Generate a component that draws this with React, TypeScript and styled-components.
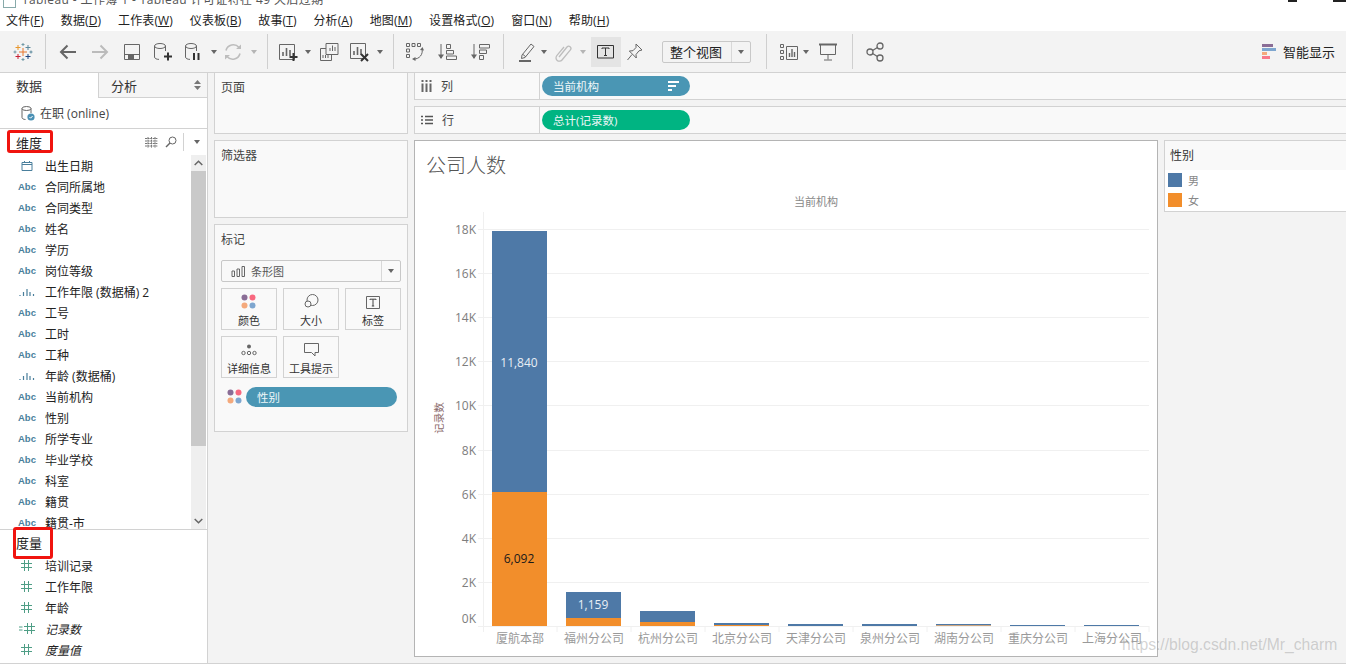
import React from "react";
import styled, { createGlobalStyle } from "styled-components";

const GlobalStyle = createGlobalStyle`
  html, body { margin: 0; padding: 0; background: #fff; }
  body { font-family: "Open Sans", "Noto Sans CJK SC", sans-serif; font-size: 12px; color: #222; }
`;

const Page = styled.div`
  position: relative;
  width: 1346px;
  height: 664px;
  overflow: hidden;
  background: #f3f3f3;
  display: flex;
  flex-direction: column;
`;

const TitleBar = styled.div`
  height: 8px;
  flex: none;
  background: #fff;
  display: flex;
  align-items: flex-end;
  overflow: hidden;
  padding-left: 3px;
  gap: 6px;
  color: #555;
  font-size: 12px;
  line-height: 16px;
  letter-spacing: 0.4px;
`;

const TitleIcon = styled.span`
  flex: none;
  width: 13px;
  height: 12px;
  border: 1px solid #8aa;
  box-sizing: border-box;
`;

const WindowControl = styled.span<{ $w: number; $ml: string }>`
  flex: none;
  align-self: flex-start;
  width: ${(p) => p.$w}px;
  height: 2px;
  margin-left: ${(p) => p.$ml};
  background: #222;
`;

const MenuBar = styled.div`
  height: 23px;
  flex: none;
  background: #fff;
  display: flex;
  align-items: center;
  gap: 17px;
  padding-left: 6px;
  color: #222;
  font-size: 12px;
`;

const MenuItem = styled.span`
  white-space: nowrap;
  letter-spacing: 0.1px;
`;

const Toolbar = styled.div`
  height: 41px;
  flex: none;
  display: flex;
  align-items: center;
  background: #f3f3f3;
  border-bottom: 1px solid #d2d2d2;
`;

const Slot = styled.div<{ $w: number; $ml?: number }>`
  flex: none;
  width: ${(p) => p.$w}px;
  margin-left: ${(p) => p.$ml ?? 0}px;
  height: 30px;
  display: flex;
  align-items: center;
  justify-content: center;
`;

const ActiveSlot = styled(Slot)`
  background: #e4e4e4;
`;

const ToolSep = styled.div<{ $ml?: number }>`
  flex: none;
  width: 1px;
  height: 35px;
  margin-left: ${(p) => p.$ml ?? 0}px;
  background: #cfcfcf;
`;

const Caret = styled.span<{ $light?: boolean }>`
  width: 0;
  height: 0;
  border-left: 3px solid transparent;
  border-right: 3px solid transparent;
  border-top: 4px solid ${(p) => (p.$light ? "#b5b5b5" : "#666")};
`;

const FitSelect = styled.div`
  flex: none;
  margin-left: 13px;
  width: 89px;
  height: 22px;
  box-sizing: border-box;
  border: 1px solid #c8c8c8;
  border-radius: 2px;
  display: flex;
  align-items: center;
  font-size: 13px;
  color: #222;
`;

const FitText = styled.span`
  flex: 1;
  padding-left: 7px;
`;

const FitCaret = styled.span`
  flex: none;
  width: 18px;
  align-self: stretch;
  display: flex;
  align-items: center;
  justify-content: center;
  border-left: 1px solid #d8d8d8;
`;

const ShowMe = styled.div`
  margin-left: auto;
  margin-right: 11px;
  display: flex;
  align-items: center;
  gap: 6px;
  font-size: 13px;
  color: #222;
`;

const Body = styled.div`
  flex: 1;
  display: flex;
  min-height: 0;
  border-bottom: 1px solid #d2d2d2;
`;

const DataPane = styled.div`
  flex: none;
  width: 208px;
  box-sizing: border-box;
  background: #fff;
  border-right: 1px solid #d2d2d2;
  display: flex;
  flex-direction: column;
`;

const Tabs = styled.div`
  display: flex;
  height: 25px;
  flex: none;
`;

const Tab = styled.div<{ $active?: boolean }>`
  box-sizing: border-box;
  display: flex;
  align-items: center;
  justify-content: space-between;
  color: #333;
  font-size: 13px;
  ${(p) =>
    p.$active
      ? `width: 98px; padding-left: 16px; background: #fff;`
      : `flex: 1; padding: 0 6px 0 12px; background: #f5f5f5; border-left: 1px solid #d2d2d2; border-bottom: 1px solid #d2d2d2;`}
`;

const Stepper = styled.span`
  display: flex;
  flex-direction: column;
  gap: 2px;
`;

const SourceRow = styled.div`
  height: 31px;
  flex: none;
  box-sizing: border-box;
  display: flex;
  align-items: center;
  gap: 4px;
  padding-left: 20px;
  border-bottom: 1px solid #d2d2d2;
  color: #444;
  font-size: 12px;
`;

const SectionHead = styled.div<{ $h: number }>`
  position: relative;
  height: ${(p) => p.$h}px;
  flex: none;
  display: flex;
  align-items: center;
  padding-left: 16px;
  font-size: 13px;
  color: #222;
`;

const RedMark = styled.span<{ $l: number; $t: number; $w: number; $h: number }>`
  position: absolute;
  left: ${(p) => p.$l}px;
  top: ${(p) => p.$t}px;
  width: ${(p) => p.$w}px;
  height: ${(p) => p.$h}px;
  box-sizing: border-box;
  border: 3px solid #f0140f;
  border-radius: 3px;
`;

const HeadTools = styled.div`
  margin-left: auto;
  display: flex;
  align-items: center;
  height: 100%;
`;

const HeadGap = styled.span`
  width: 7px;
`;

const HeadSep = styled.span`
  width: 1px;
  height: 18px;
  background: #d2d2d2;
  margin: 0 7px 0 6px;
`;

const CaretBox = styled.span`
  display: flex;
  width: 11px;
  justify-content: center;
  margin-right: 5px;
`;

const ListWrap = styled.div`
  height: 374px;
  flex: none;
  display: flex;
  border-bottom: 1px solid #d2d2d2;
  overflow: hidden;
`;

const FieldList = styled.div`
  flex: 1;
  overflow: hidden;
`;

const FieldRow = styled.div`
  height: 21px;
  flex: none;
  display: flex;
  align-items: center;
  white-space: nowrap;
  color: #222;
  font-size: 12px;
`;

const FieldIcon = styled.span`
  flex: none;
  width: 45px;
  padding-left: 9px;
  box-sizing: border-box;
  display: flex;
  justify-content: center;
`;

const AbcGlyph = styled.span`
  font-family: "Liberation Sans", sans-serif;
  font-size: 9.5px;
  font-weight: 700;
  color: #4a7f9c;
  letter-spacing: 0.1px;
`;

const FieldName = styled.span<{ $italic?: boolean }>`
  font-style: ${(p) => (p.$italic ? "italic" : "normal")};
`;

const Scrollbar = styled.div`
  flex: none;
  width: 15px;
  margin-right: 1px;
  display: flex;
  flex-direction: column;
  background: #efefef;
`;

const ScrollBtn = styled.div`
  height: 16px;
  flex: none;
  display: flex;
  align-items: center;
  justify-content: center;
`;

const ScrollThumb = styled.div`
  height: 275px;
  flex: none;
  background: #c9c9c9;
`;

const ScrollGap = styled.div`
  flex: 1;
`;

const MiddlePane = styled.div`
  flex: none;
  width: 194px;
  margin-left: 6px;
  display: flex;
  flex-direction: column;
  gap: 6px;
`;

const Card = styled.div<{ $h: number; $noTop?: boolean }>`
  height: ${(p) => p.$h}px;
  flex: none;
  box-sizing: border-box;
  background: #f9f9f9;
  border: 1px solid #d2d2d2;
  ${(p) => (p.$noTop ? "border-top: 0;" : "")}
  padding: 6px 6px;
  color: #444;
  font-size: 12px;
  line-height: 17px;
`;

const MarkSelect = styled.div`
  margin-top: 12px;
  height: 22px;
  box-sizing: border-box;
  border: 1px solid #c8c8c8;
  border-radius: 2px;
  display: flex;
  align-items: center;
  color: #555;
  font-size: 11px;
  padding-left: 9px;
  gap: 6px;
`;

const MarkCaret = styled.span`
  margin-left: auto;
  width: 18px;
  align-self: stretch;
  border-left: 1px solid #d8d8d8;
  display: flex;
  align-items: center;
  justify-content: center;
`;

const MarkGrid = styled.div`
  margin-top: 6px;
  display: grid;
  grid-template-columns: repeat(3, 56px);
  grid-auto-rows: 42px;
  gap: 6px;
`;

const MarkButton = styled.div`
  box-sizing: border-box;
  border: 1px solid #d2d2d2;
  display: flex;
  flex-direction: column;
  align-items: center;
  justify-content: flex-end;
  color: #333;
  font-size: 11px;
  line-height: 16px;
  white-space: nowrap;
`;

const MarkIcon = styled.span`
  height: 20px;
  margin-bottom: 1px;
  display: flex;
  align-items: center;
`;

const PillRow = styled.div`
  margin-top: 9px;
  display: flex;
  align-items: center;
  gap: 3px;
  padding-left: 6px;
`;

const Pill = styled.div<{ $color: string; $w: number }>`
  flex: none;
  box-sizing: border-box;
  width: ${(p) => p.$w}px;
  height: 20px;
  border-radius: 10px;
  background: ${(p) => p.$color};
  color: #eef6f8;
  font-size: 11.5px;
  display: flex;
  align-items: center;
  justify-content: space-between;
  padding: 0 11px;
`;

const MainPane = styled.div`
  flex: 1;
  margin-left: 6px;
  display: flex;
  flex-direction: column;
  min-width: 0;
`;

const Shelf = styled.div<{ $h: number; $noTop?: boolean; $mt?: number }>`
  height: ${(p) => p.$h}px;
  flex: none;
  box-sizing: border-box;
  margin-top: ${(p) => p.$mt ?? 0}px;
  background: #f9f9f9;
  border: 1px solid #d2d2d2;
  border-right: 0;
  ${(p) => (p.$noTop ? "border-top: 0;" : "")}
  display: flex;
  align-items: center;
`;

const ShelfLabel = styled.div`
  flex: none;
  width: 118px;
  align-self: stretch;
  border-right: 1px solid #d2d2d2;
  margin-right: 2px;
  display: flex;
  align-items: center;
  gap: 9px;
  padding-left: 6px;
  color: #444;
  font-size: 12px;
`;

const ViewRow = styled.div`
  margin-top: 6px;
  display: flex;
  gap: 6px;
  align-items: flex-start;
`;

const ChartCard = styled.div`
  flex: none;
  width: 744px;
  height: 517px;
  box-sizing: border-box;
  background: #fff;
  border: 1px solid #b4b4b4;
  display: flex;
  flex-direction: column;
`;

const ChartTitle = styled.div`
  height: 44px;
  flex: none;
  box-sizing: border-box;
  padding: 10px 0 0 11px;
  font-size: 20px;
  font-weight: 300;
  line-height: 30px;
  color: #555;
`;

const ChartSvg = styled.svg`
  display: block;
  flex: 1;
  font-family: "Open Sans", "Noto Sans CJK SC", sans-serif;
`;

const Legend = styled.div`
  flex: 1;
  height: 72px;
  box-sizing: border-box;
  border: 1px solid #d2d2d2;
  border-right: 0;
  background: #fff;
`;

const LegendHead = styled.div`
  height: 29px;
  box-sizing: border-box;
  background: #f9f9f9;
  display: flex;
  align-items: center;
  padding: 0 0 2px 5px;
  color: #333;
  font-size: 12px;
`;

const LegendRow = styled.div`
  height: 20px;
  display: flex;
  align-items: center;
  gap: 6px;
  padding-left: 3px;
  color: #888;
  font-size: 11px;
`;

const Swatch = styled.span<{ $color: string }>`
  width: 14px;
  height: 14px;
  background: ${(p) => p.$color};
`;

const Watermark = styled.div`
  position: absolute;
  left: 1122px;
  top: 634px;
  font-family: "Liberation Sans", sans-serif;
  font-size: 15.7px;
  line-height: 22px;
  color: rgba(150, 150, 150, 0.42);
  white-space: nowrap;
  pointer-events: none;
`;

const G = "#666";

const Svg = ({ w = 20, h = 20, children }: { w?: number; h?: number; children: React.ReactNode }) => (
  <svg width={w} height={h} viewBox={`0 0 ${w} ${h}`} fill="none">
    {children}
  </svg>
);

const TableauLogo = () => {
  const cross = (x: number, y: number, r: number, c: string) => (
    <path key={`${x}-${y}`} d={`M${x - r} ${y}H${x + r}M${x} ${y - r}V${y + r}`} stroke={c} strokeWidth={1} />
  );
  return (
    <Svg>
      {cross(10, 10, 4, "#e8762c")}
      {cross(5, 5.5, 2.5, "#e8962c")}
      {cross(15, 5.5, 2.5, "#5b879b")}
      {cross(5, 14.5, 2.5, "#c72035")}
      {cross(15, 14.5, 2.5, "#1f447e")}
      {cross(10, 2.5, 1.5, "#7099a6")}
      {cross(10, 17.5, 1.5, "#7099a6")}
      {cross(2, 10, 1.5, "#7099a6")}
      {cross(18, 10, 1.5, "#59879b")}
    </Svg>
  );
};

const Arrow = ({ dir, color }: { dir: "l" | "r"; color: string }) => (
  <Svg>
    <path
      d={dir === "l" ? "M18 10H3M9.5 3.5L3 10l6.5 6.5" : "M2 10h15M10.5 3.5L17 10l-6.5 6.5"}
      stroke={color}
      strokeWidth={2}
    />
  </Svg>
);

const SaveIcon = () => (
  <Svg w={18} h={18}>
    <path d="M1.5 1.5h15v15h-15z" stroke={G} />
    <path d="M1.5 11.5h15" stroke={G} />
    <path d="M5 12h6v4.5H5z" fill={G} />
  </Svg>
);

const CylinderBody = () => (
  <>
    <ellipse cx="7" cy="4" rx="5.5" ry="2.5" stroke={G} />
    <path d="M1.5 4v11c0 1.4 2 2.4 4.5 2.4M12.5 4v5" stroke={G} />
  </>
);

const DataPlus = () => (
  <Svg>
    <CylinderBody />
    <path d="M15 10.5v8M11 14.5h8" stroke="#333" strokeWidth={2} />
  </Svg>
);

const DataPause = () => (
  <Svg>
    <CylinderBody />
    <path d="M10 11v7M14.5 11v7" stroke="#333" strokeWidth={2} />
  </Svg>
);

const RefreshIcon = () => (
  <Svg>
    <path d="M3 8.5A7.5 7.5 0 0 1 16 5.5M17 11.5A7.5 7.5 0 0 1 4 14.5" stroke="#bdbdbd" strokeWidth={1.6} />
    <path d="M13 7h5V2.5zM7 13H2v4.5z" fill="#bdbdbd" />
  </Svg>
);

const NewSheet = () => (
  <Svg>
    <path d="M1.5 2.5h15v15h-15z" stroke={G} />
    <path d="M5 14V10M8.5 14V6M12 14V8" stroke={G} strokeWidth={1.6} />
    <path d="M15.5 11v8M11.5 15h8" stroke="#333" strokeWidth={2} />
  </Svg>
);

const DupSheet = () => (
  <Svg>
    <path d="M7 1.5h12v11H7z" stroke={G} fill="#f3f3f3" />
    <path d="M11 9V6M13.5 9V3.5M16 9V5" stroke={G} />
    <path d="M1.500 6.500H7M1.500 6.500v12h11v-6" stroke={G} />
    <path d="M4 16v-3M6.500 16v-3M9 16v-3" stroke={G} />
  </Svg>
);

const ClearSheet = () => (
  <Svg>
    <path d="M1.500 1.500h15v15h-15z" stroke={G} />
    <path d="M5 13V9M8.500 13V5M12 13V7" stroke={G} strokeWidth={1.6} />
    <path d="M12 12l7 7M19 12l-7 7" stroke="#333" strokeWidth={2} />
  </Svg>
);

const SwapIcon = () => (
  <Svg>
    <path
      d="M1.500 1.500h3v3h-3zM7 1.500h3v3H7zM12.500 1.500h3v3h-3zM1.500 7h3v3h-3zM1.500 12.500h3v3h-3z"
      stroke={G}
    />
    <path d="M17 7a8 8 0 0 1-8 10" stroke={G} />
    <path d="M15 8l2.500-3 1.500 3.500zM10.500 15l-3.500 2 3.500 2z" fill={G} />
  </Svg>
);

const SortIcon = ({ asc }: { asc?: boolean }) => (
  <Svg>
    <path d="M4 2v14" stroke={G} />
    <path d="M1 12.500h6L4 17z" fill={G} />
    {asc ? (
      <path d="M9.500 2.500h4v4h-4zM9.500 8.500h7v3.500h-7zM9.500 14h10v3.500h-10z" stroke={G} />
    ) : (
      <path d="M9.500 2.500h10v3.500h-10zM9.500 8h7v3.500h-7zM9.500 13.500h4v4h-4z" stroke={G} />
    )}
  </Svg>
);

const HighlightIcon = () => (
  <Svg>
    <path d="M5 13L14 2l3 2.500-9 11-3.500 1z" stroke={G} />
    <path d="M6 12.500l3 2.500" stroke={G} />
    <path d="M2 19h12" stroke={G} strokeWidth={2} />
  </Svg>
);

const ClipIcon = () => (
  <Svg>
    <path
      d="M6 15l8-10a2.200 2.200 0 0 1 3.400 2.800L9 18a3.400 3.400 0 0 1-5.200-4.400L11 5"
      stroke="#bdbdbd"
      strokeWidth={1.3}
    />
  </Svg>
);

const TextIcon = () => (
  <Svg w={18} h={14}>
    <path d="M.5.5h16v12.500H.5z" stroke="#333" />
    <path d="M5 4V3h7v1M8.500 3v7M7 10.500h3" stroke="#333" />
  </Svg>
);

const PinIcon = () => (
  <Svg>
    <path d="M11 2l6 6-3 .8-3 3.700.3 3.500-7-7 3.700-.3 3-3.200zM7 12.500L2.500 18" stroke={G} />
  </Svg>
);

const ShowMeBars = () => (
  <Svg>
    <path d="M1.500 2.500h3v3h-3zM1.500 8.500h3v3h-3zM1.500 14.500h3v3h-3zM7.500 4.500h11v13h-11z" stroke={G} />
    <path d="M10.500 15v-4M13 15V7M15.500 15v-5" stroke={G} strokeWidth={1.4} />
  </Svg>
);

const PresentIcon = () => (
  <Svg>
    <path d="M1 2.500h18" stroke={G} strokeWidth={2} />
    <path d="M2.500 3v9.500h15V3M10 12.500v5M6 18h8" stroke={G} />
  </Svg>
);

const ShareIcon = () => (
  <Svg>
    <circle cx="5" cy="10" r="3" stroke={G} strokeWidth={1.3} />
    <circle cx="15" cy="4" r="3" stroke={G} strokeWidth={1.3} />
    <circle cx="15" cy="16" r="3" stroke={G} strokeWidth={1.3} />
    <path d="M7.600 8.500l4.800-3M7.600 11.500l4.800 3" stroke={G} strokeWidth={1.3} />
  </Svg>
);

const ShowMeLogo = () => (
  <Svg w={15} h={16}>
    <rect y="0" width="11" height="3" fill="#8a6d96" />
    <rect y="4" width="14" height="3" fill="#7ea6cf" />
    <rect y="8" width="5" height="3" fill="#f4a97c" />
    <rect y="12" width="8" height="3" fill="#f8788a" />
  </Svg>
);

const DataSourceIcon = () => (
  <Svg w={16} h={16}>
    <ellipse cx="6.500" cy="3.500" rx="4.500" ry="2" stroke={G} />
    <path d="M2 3.500v9c0 1.100 1.600 2 3.500 2M11 3.500V8" stroke={G} />
    <circle cx="11" cy="12" r="3.600" fill="#4a90b4" />
    <path d="M9.500 12l1.100 1.200 2-2.200" stroke="#fff" />
  </Svg>
);

const ListGlyph = () => (
  <Svg w={13} h={11}>
    <path
      d="M0 1.500h13M0 4h13M0 6.500h13M0 9h13M3 0v11M6.500 0v11M10 0v11"
      stroke="#777"
      strokeWidth={1}
      strokeDasharray="2 .6"
    />
  </Svg>
);

const SearchGlyph = () => (
  <Svg w={12} h={12}>
    <circle cx="7.500" cy="4.500" r="3.500" stroke="#666" />
    <path d="M5 7L1 11" stroke="#666" strokeWidth={1.4} />
  </Svg>
);

const DateGlyph = () => (
  <Svg w={12} h={11}>
    <path d="M1 2.500h10v8H1zM1 4.500h10M3.500 1v2M8.500 1v2" stroke="#4a7f9c" />
  </Svg>
);

const BinGlyph = () => (
  <Svg w={16} h={10}>
    <path d="M1 8v1M4.500 5v4M8 2v7M11 5v4M14.500 7v2" stroke="#4a7f9c" strokeWidth={1.2} />
  </Svg>
);

const HashGlyph = ({ calc }: { calc?: boolean }) => (
  <Svg w={calc ? 16 : 12} h={11}>
    <g transform={calc ? "translate(5 0)" : undefined}>
      <path d="M3.500 0v11M7.500 0v11M0 3.500h11M0 7.500h11" stroke="#4f9e86" />
    </g>
    {calc && <path d="M0 4h3.500M0 7h3.500" stroke="#4f9e86" />}
  </Svg>
);

const Chevron = ({ up }: { up?: boolean }) => (
  <Svg w={9} h={6}>
    <path d={up ? "M.7 5L4.500 1.200 8.300 5" : "M.7 1l3.800 3.800L8.300 1"} stroke="#666" strokeWidth={1.5} />
  </Svg>
);

const Tri = ({ up }: { up?: boolean }) => (
  <Svg w={7} h={4}>
    <path d={up ? "M0 4L3.500 0 7 4z" : "M0 0L3.500 4 7 0z"} fill="#777" />
  </Svg>
);

const ColorDots = () => (
  <Svg w={16} h={16}>
    <circle cx="3.500" cy="3.500" r="3" fill="#8a6d96" />
    <circle cx="11.500" cy="3.500" r="3" fill="#f8687f" />
    <circle cx="3.500" cy="11.500" r="3" fill="#f4a97c" />
    <circle cx="11.500" cy="11.500" r="3" fill="#7ea6cf" />
  </Svg>
);

const SizeGlyph = () => (
  <Svg w={16} h={16}>
    <circle cx="9.500" cy="6" r="5.500" stroke="#666" />
    <circle cx="5" cy="10" r="3" stroke="#666" fill="#f9f9f9" />
  </Svg>
);

const LabelGlyph = () => (
  <Svg w={14} h={13}>
    <path d="M.5.5h13v12H.5z" stroke="#666" />
    <path d="M4 4V3.200h6V4M7 3.200V10M5.800 10h2.400" stroke="#444" />
  </Svg>
);

const DetailGlyph = () => (
  <Svg w={16} h={12}>
    <circle cx="8" cy="2.500" r="2" fill="#666" />
    <circle cx="2.500" cy="9" r="1.700" stroke="#666" />
    <circle cx="8" cy="9" r="1.700" stroke="#666" />
    <circle cx="13.500" cy="9" r="1.700" stroke="#666" />
  </Svg>
);

const TooltipGlyph = () => (
  <Svg w={15} h={14}>
    <path d="M.5.500h14v9H11v3.500L7.500 9.500H.5z" stroke="#666" />
  </Svg>
);

const BarMarkGlyph = () => (
  <Svg w={14} h={11}>
    <path d="M1 5h2.500v5.500H1zM6 3h2.500v7.500H6zM11 .5h2.500v10H11z" stroke="#666" />
  </Svg>
);

const ColumnsGlyph = () => (
  <Svg w={11} h={12}>
    <path d="M1.500 0v2M5.500 0v2M9.500 0v2M1.500 3.500V12M5.500 3.500V12M9.500 3.500V12" stroke="#666" strokeWidth={2} />
  </Svg>
);

const RowsGlyph = () => (
  <Svg w={12} h={10}>
    <path d="M0 1.500h2M4 1.500h8M0 5h2M4 5h8M0 8.500h2M4 8.500h8" stroke="#555" strokeWidth={1.4} />
  </Svg>
);

const SortPillGlyph = () => (
  <Svg w={11} h={10}>
    <path d="M0 1h11M0 5h8M0 9h4" stroke="#fff" strokeWidth={2} />
  </Svg>
);

type FieldKind = "abc" | "date" | "bin" | "hash" | "calc";

const dimensions: [FieldKind, string][] = [
  ["date", "出生日期"],
  ["abc", "合同所属地"],
  ["abc", "合同类型"],
  ["abc", "姓名"],
  ["abc", "学历"],
  ["abc", "岗位等级"],
  ["bin", "工作年限 (数据桶) 2"],
  ["abc", "工号"],
  ["abc", "工时"],
  ["abc", "工种"],
  ["bin", "年龄 (数据桶)"],
  ["abc", "当前机构"],
  ["abc", "性别"],
  ["abc", "所学专业"],
  ["abc", "毕业学校"],
  ["abc", "科室"],
  ["abc", "籍贯"],
  ["abc", "籍贯-市"],
];

const measures: [FieldKind, string, boolean?][] = [
  ["hash", "培训记录"],
  ["hash", "工作年限"],
  ["hash", "年龄"],
  ["calc", "记录数", true],
  ["hash", "度量值", true],
];

const fieldIcon = (kind: FieldKind) => {
  if (kind === "abc") return <AbcGlyph>Abc</AbcGlyph>;
  if (kind === "date") return <DateGlyph />;
  if (kind === "bin") return <BinGlyph />;
  return <HashGlyph calc={kind === "calc"} />;
};

const menus: [string, string][] = [
  ["文件", "F"],
  ["数据", "D"],
  ["工作表", "W"],
  ["仪表板", "B"],
  ["故事", "T"],
  ["分析", "A"],
  ["地图", "M"],
  ["设置格式", "O"],
  ["窗口", "N"],
  ["帮助", "H"],
];

const yTicks = [18, 16, 14, 12, 10, 8, 6, 4, 2, 0];
const yOf = (k: number) => Math.round(626 - (k / 18) * 397) + 0.5;

const bars = [
  { name: "厦航本部", top: 231, split: 492 },
  { name: "福州分公司", top: 592, split: 618 },
  { name: "杭州分公司", top: 611, split: 622 },
  { name: "北京分公司", top: 623, split: 625 },
  { name: "天津分公司", top: 624, split: 626 },
  { name: "泉州分公司", top: 624, split: 626 },
  { name: "湖南分公司", top: 624, split: 625.5 },
  { name: "重庆分公司", top: 625, split: 626 },
  { name: "上海分公司", top: 625, split: 626 },
];

const Chart = () => (
  <ChartSvg viewBox="415 185 742 471" width="742" height="471">
    <text x="816" y="206" fontSize="11" fill="#888" textAnchor="middle">
      当前机构
    </text>
    <text transform="translate(443 418) rotate(-90)" fontSize="10.500" fill="#8a6a6a" textAnchor="middle">
      记录数
    </text>
    {yTicks.map((k) => (
      <g key={k}>
        <line x1="478" x2="1149" y1={yOf(k)} y2={yOf(k)} stroke="#f0f0f0" />
        <text x="476" y={k === 0 ? 622.5 : yOf(k) + 4} fontSize="12" fill="#7d7d7d" textAnchor="end">
          {k}K
        </text>
      </g>
    ))}
    <line x1="483.500" x2="483.500" y1="212" y2="632" stroke="#f0f0f0" />
    {bars.map((b, i) => {
      const x = 492 + i * 74;
      return (
        <g key={b.name}>
          <rect x={x} y={b.top} width="55" height={b.split - b.top} fill="#4e79a7" />
          <rect x={x} y={b.split} width="55" height={626 - b.split} fill="#f28e2b" />
          <line x1={x + 65} x2={x + 65} y1="626" y2="632" stroke="#f0f0f0" />
          <text x={x + 28} y="643" fontSize="12" fill="#999" textAnchor="middle">
            {b.name}
          </text>
        </g>
      );
    })}
    <text x="519" y="366.500" fontSize="12" fill="#e8eef5" textAnchor="middle">
      11,840
    </text>
    <text x="519" y="563" fontSize="12" fill="#1a1a1a" textAnchor="middle">
      6,092
    </text>
    <text x="593" y="609" fontSize="12" fill="#e8eef5" textAnchor="middle">
      1,159
    </text>
  </ChartSvg>
);

export default function App() {
  return (
    <Page>
      <GlobalStyle />
      <TitleBar>
        <TitleIcon />
        <span>Tableau - 工作簿 1 - Tableau 许可证将在 49 天后过期</span>
        <WindowControl $w={9} $ml="auto" />
        <WindowControl $w={13} $ml="30px" />
      </TitleBar>
      <MenuBar>
        {menus.map(([label, key]) => (
          <MenuItem key={key}>
            {label}(<u>{key}</u>)
          </MenuItem>
        ))}
      </MenuBar>
      <Toolbar>
        <Slot $w={45}>
          <TableauLogo />
        </Slot>
        <ToolSep />
        <Slot $w={32} $ml={6}>
          <Arrow dir="l" color={G} />
        </Slot>
        <Slot $w={32}>
          <Arrow dir="r" color="#bbb" />
        </Slot>
        <Slot $w={31}>
          <SaveIcon />
        </Slot>
        <Slot $w={32}>
          <DataPlus />
        </Slot>
        <Slot $w={29}>
          <DataPause />
        </Slot>
        <Slot $w={12}>
          <Caret />
        </Slot>
        <Slot $w={26}>
          <RefreshIcon />
        </Slot>
        <Slot $w={16}>
          <Caret $light />
        </Slot>
        <ToolSep $ml={5} />
        <Slot $w={28} $ml={6}>
          <NewSheet />
        </Slot>
        <Slot $w={12}>
          <Caret />
        </Slot>
        <Slot $w={28} $ml={1}>
          <DupSheet />
        </Slot>
        <Slot $w={28} $ml={2}>
          <ClearSheet />
        </Slot>
        <Slot $w={12} $ml={1}>
          <Caret />
        </Slot>
        <ToolSep $ml={7} />
        <Slot $w={28} $ml={7}>
          <SwapIcon />
        </Slot>
        <Slot $w={28} $ml={4}>
          <SortIcon asc />
        </Slot>
        <Slot $w={28} $ml={5}>
          <SortIcon />
        </Slot>
        <ToolSep $ml={9} />
        <Slot $w={28} $ml={9}>
          <HighlightIcon />
        </Slot>
        <Slot $w={6}>
          <Caret />
        </Slot>
        <Slot $w={28} $ml={2}>
          <ClipIcon />
        </Slot>
        <Slot $w={12}>
          <Caret $light />
        </Slot>
        <ActiveSlot $w={30} $ml={2}>
          <TextIcon />
        </ActiveSlot>
        <Slot $w={28}>
          <PinIcon />
        </Slot>
        <FitSelect>
          <FitText>整个视图</FitText>
          <FitCaret>
            <Caret />
          </FitCaret>
        </FitSelect>
        <ToolSep $ml={15} />
        <Slot $w={28} $ml={8}>
          <ShowMeBars />
        </Slot>
        <Slot $w={6}>
          <Caret />
        </Slot>
        <Slot $w={28} $ml={5}>
          <PresentIcon />
        </Slot>
        <ToolSep $ml={10} />
        <Slot $w={28} $ml={8}>
          <ShareIcon />
        </Slot>
        <ShowMe>
          <ShowMeLogo />
          智能显示
        </ShowMe>
      </Toolbar>
      <Body>
        <DataPane>
          <Tabs>
            <Tab $active>数据</Tab>
            <Tab>
              分析
              <Stepper>
                <Tri up />
                <Tri />
              </Stepper>
            </Tab>
          </Tabs>
          <SourceRow>
            <DataSourceIcon />在职 (online)
          </SourceRow>
          <SectionHead $h={26}>
            维度
            <RedMark $l={7} $t={1} $w={46} $h={23} />
            <HeadTools>
              <ListGlyph />
              <HeadGap />
              <SearchGlyph />
              <HeadSep />
              <CaretBox>
                <Caret />
              </CaretBox>
            </HeadTools>
          </SectionHead>
          <ListWrap>
            <FieldList>
              {dimensions.map(([kind, name]) => (
                <FieldRow key={name}>
                  <FieldIcon>{fieldIcon(kind)}</FieldIcon>
                  <FieldName>{name}</FieldName>
                </FieldRow>
              ))}
            </FieldList>
            <Scrollbar>
              <ScrollBtn>
                <Chevron up />
              </ScrollBtn>
              <ScrollThumb />
              <ScrollGap />
              <ScrollBtn>
                <Chevron />
              </ScrollBtn>
            </Scrollbar>
          </ListWrap>
          <SectionHead $h={25}>
            度量
            <RedMark $l={13} $t={-3} $w={40} $h={32} />
          </SectionHead>
          {measures.map(([kind, name, italic]) => (
            <FieldRow key={name}>
              <FieldIcon>{fieldIcon(kind)}</FieldIcon>
              <FieldName $italic={italic}>{name}</FieldName>
            </FieldRow>
          ))}
        </DataPane>
        <MiddlePane>
          <Card $h={61} $noTop>
            页面
          </Card>
          <Card $h={78}>筛选器</Card>
          <Card $h={208}>
            标记
            <MarkSelect>
              <BarMarkGlyph />
              条形图
              <MarkCaret>
                <Caret />
              </MarkCaret>
            </MarkSelect>
            <MarkGrid>
              <MarkButton>
                <MarkIcon>
                  <ColorDots />
                </MarkIcon>
                颜色
              </MarkButton>
              <MarkButton>
                <MarkIcon>
                  <SizeGlyph />
                </MarkIcon>
                大小
              </MarkButton>
              <MarkButton>
                <MarkIcon>
                  <LabelGlyph />
                </MarkIcon>
                标签
              </MarkButton>
              <MarkButton>
                <MarkIcon>
                  <DetailGlyph />
                </MarkIcon>
                详细信息
              </MarkButton>
              <MarkButton>
                <MarkIcon>
                  <TooltipGlyph />
                </MarkIcon>
                工具提示
              </MarkButton>
            </MarkGrid>
            <PillRow>
              <ColorDots />
              <Pill $color="#4a96b4" $w={151}>
                性别
              </Pill>
            </PillRow>
          </Card>
        </MiddlePane>
        <MainPane>
          <Shelf $h={27} $noTop>
            <ShelfLabel>
              <ColumnsGlyph />列
            </ShelfLabel>
            <Pill $color="#4a96b4" $w={148}>
              当前机构
              <SortPillGlyph />
            </Pill>
          </Shelf>
          <Shelf $h={28} $mt={6}>
            <ShelfLabel>
              <RowsGlyph />行
            </ShelfLabel>
            <Pill $color="#00b482" $w={148}>
              总计(记录数)
            </Pill>
          </Shelf>
          <ViewRow>
            <ChartCard>
              <ChartTitle>公司人数</ChartTitle>
              <Chart />
            </ChartCard>
            <Legend>
              <LegendHead>性别</LegendHead>
              <LegendRow>
                <Swatch $color="#4e79a7" />男
              </LegendRow>
              <LegendRow>
                <Swatch $color="#f28e2b" />女
              </LegendRow>
            </Legend>
          </ViewRow>
        </MainPane>
      </Body>
      <Watermark>https://blog.csdn.net/Mr_charm</Watermark>
    </Page>
  );
}
